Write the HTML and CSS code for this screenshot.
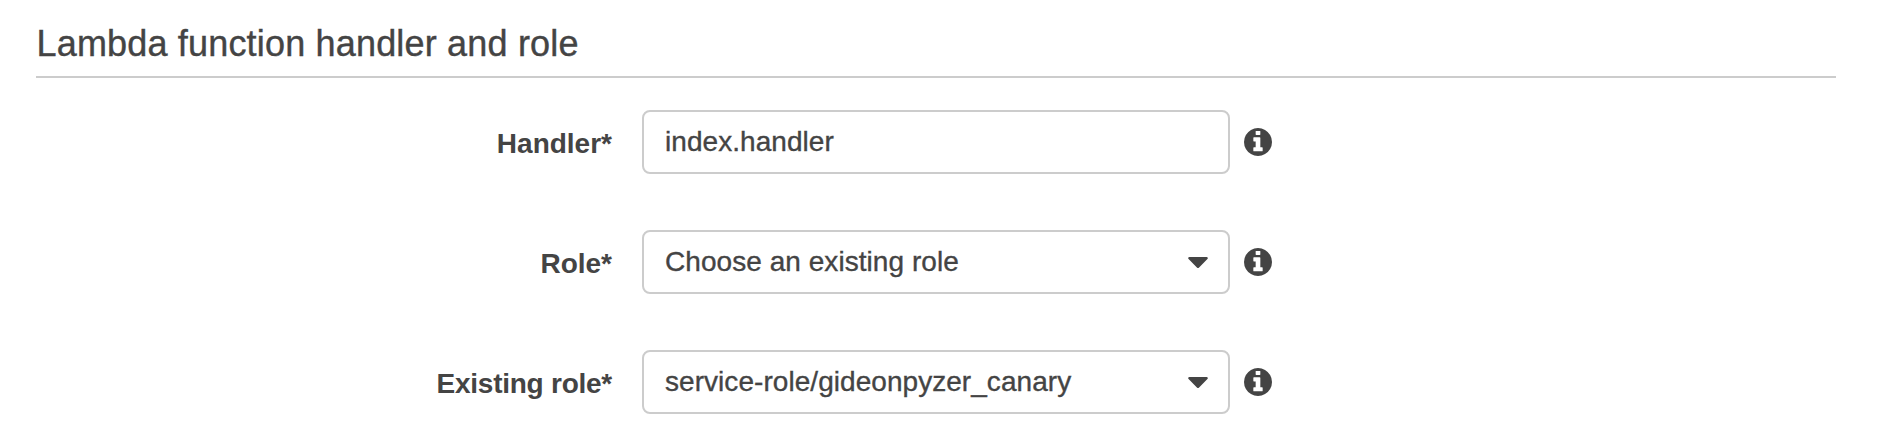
FILE: index.html
```html
<!DOCTYPE html>
<html lang="en">
<head>
<meta charset="utf-8">
<title>Lambda function handler and role</title>
<link rel="stylesheet" href="styles.css">
</head>
<body>
<svg width="0" height="0" class="symbols" aria-hidden="true">
  <symbol id="info" viewBox="0 128 1536 1536"><path d="M1024 1376v-160q0-14-9-23t-23-9h-96v-512q0-14-9-23t-23-9h-320q-14 0-23 9t-9 23v160q0 14 9 23t23 9h96v320h-96q-14 0-23 9t-9 23v160q0 14 9 23t23 9h448q14 0 23-9t9-23zm-128-896v-160q0-14-9-23t-23-9h-192q-14 0-23 9t-9 23v160q0 14 9 23t23 9h192q14 0 23-9t9-23zm640 416q0 209-103 385.5t-279.5 279.5-385.5 103-385.5-103-279.5-279.5-103-385.5 103-385.5 279.5-279.5 385.5-103 385.5 103 279.5 279.5 103 385.5z"/></symbol>
  <symbol id="caret" viewBox="0 640 1024 576"><path d="M1024 704q0 26-19 45l-448 448q-19 19-45 19t-45-19l-448-448q-19-19-19-45t19-45 45-19h896q26 0 45 19t19 45z"/></symbol>
</svg>
<main class="section">
  <h2 class="title">Lambda function handler and role</h2>
  <div class="row">
    <div class="label">Handler*</div>
    <div class="field"><span>index.handler</span></div>
    <svg class="info"><use href="#info"/></svg>
  </div>
  <div class="row">
    <div class="label">Role*</div>
    <div class="field"><span>Choose an existing role</span><svg class="caret"><use href="#caret"/></svg></div>
    <svg class="info"><use href="#info"/></svg>
  </div>
  <div class="row">
    <div class="label existing">Existing role*</div>
    <div class="field"><span>service-role/gideonpyzer_canary</span><svg class="caret"><use href="#caret"/></svg></div>
    <svg class="info"><use href="#info"/></svg>
  </div>
</main>
</body>
</html>
```
FILE: styles.css
```css
* { box-sizing: border-box; }
body {
  margin: 0;
  background: #fff;
  color: #444;
  font-family: "Liberation Sans", Arial, sans-serif;
  font-size: 28px;
}
.symbols { display: none; }
.section { padding: 22px 52px 0 36px; }
.title {
  margin: 0 0 32px;
  height: 56px;
  border-bottom: 2px solid #ccc;
  font-size: 36px;
  font-weight: 400;
  line-height: 43px;
  letter-spacing: 0.18px;
  text-indent: 0.5px;
  -webkit-text-stroke: 0.4px #444;
}
.row {
  display: flex;
  align-items: center;
  height: 64px;
}
.row + .row { margin-top: 56px; }
.label {
  width: 576px;
  margin-right: 30px;
  padding-top: 3px;
  text-align: right;
  font-weight: 700;
  line-height: 32px;
}
.existing { letter-spacing: -0.25px; }
.field {
  display: flex;
  align-items: center;
  justify-content: space-between;
  width: 588px;
  height: 64px;
  padding: 0 20px 0 21px;
  border: 2px solid #ccc;
  border-radius: 8px;
  line-height: 32px;
  letter-spacing: 0.05px;
  -webkit-text-stroke: 0.35px #444;
}
.caret { width: 20px; height: 11px; fill: #444; stroke: none; }
.info { width: 28px; height: 28px; margin-left: 14px; fill: #444; }
```
